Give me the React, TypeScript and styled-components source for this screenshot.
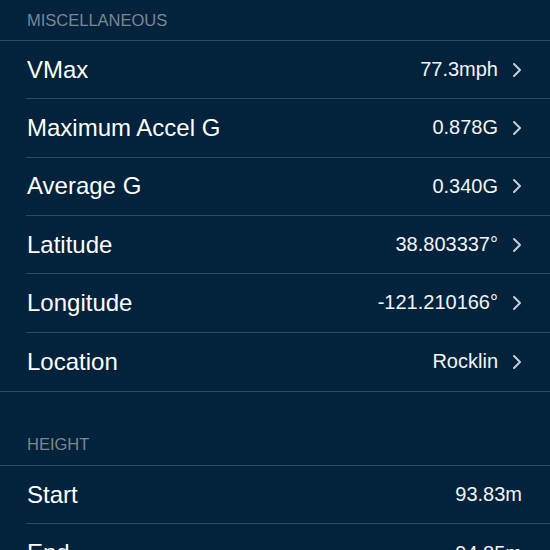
import React from "react";
import styled, { createGlobalStyle } from "styled-components";

const Global = createGlobalStyle`
  html, body { margin: 0; padding: 0; background: #03223b; }
  body { font-family: "Liberation Sans", Arial, sans-serif; -webkit-font-smoothing: antialiased; }
`;

const Page = styled.div`
  width: 550px;
  height: 550px;
  overflow: hidden;
  background: #03223b;
  display: flex;
  flex-direction: column;
`;

const SectionHeader = styled.div<{ $gap: number }>`
  flex-shrink: 0;
  margin-top: ${(p) => p.$gap}px;
  height: 41px;
  box-sizing: border-box;
  padding-left: 27px;
  display: flex;
  align-items: center;
  color: #7c8792;
  font-size: 16.5px;
  border-bottom: 1px solid #33485b;
`;

const List = styled.div`
  flex-shrink: 0;
  display: flex;
  flex-direction: column;
  border-bottom: 1px solid #33485b;
`;

const Row = styled.div`
  flex-shrink: 0;
  height: 58.33px;
  box-sizing: border-box;
  margin-left: 26px;
  padding-right: 28px;
  display: flex;
  align-items: center;
  justify-content: space-between;
  border-bottom: 1px solid #33485b;
  &:last-child { border-bottom: none; }
`;

const Label = styled.span`
  color: #ffffff;
  font-size: 24px;
  padding-left: 1px;
`;

const Right = styled.div`
  display: flex;
  align-items: center;
  gap: 14px;
`;

const Value = styled.span`
  color: #f2f4f6;
  font-size: 20px;
`;

const Chevron = () => (
  <svg width="10" height="16" viewBox="0 0 10 16" fill="none">
    <path d="M2 2 L8 8 L2 14" stroke="#c9ced4" strokeWidth="2" strokeLinecap="round" strokeLinejoin="round" />
  </svg>
);

const misc = [
  ["VMax", "77.3mph"],
  ["Maximum Accel G", "0.878G"],
  ["Average G", "0.340G"],
  ["Latitude", "38.803337°"],
  ["Longitude", "-121.210166°"],
  ["Location", "Rocklin"],
];

const height = [
  ["Start", "93.83m"],
  ["End", "94.85m"],
];

export default function App() {
  return (
    <Page>
      <Global />
      <SectionHeader $gap={0}>MISCELLANEOUS</SectionHeader>
      <List>
        {misc.map(([l, v]) => (
          <Row key={l}>
            <Label>{l}</Label>
            <Right>
              <Value>{v}</Value>
              <Chevron />
            </Right>
          </Row>
        ))}
      </List>
      <SectionHeader $gap={33}>HEIGHT</SectionHeader>
      <List>
        {height.map(([l, v]) => (
          <Row key={l}>
            <Label>{l}</Label>
            <Right>
              <Value>{v}</Value>
            </Right>
          </Row>
        ))}
      </List>
    </Page>
  );
}
